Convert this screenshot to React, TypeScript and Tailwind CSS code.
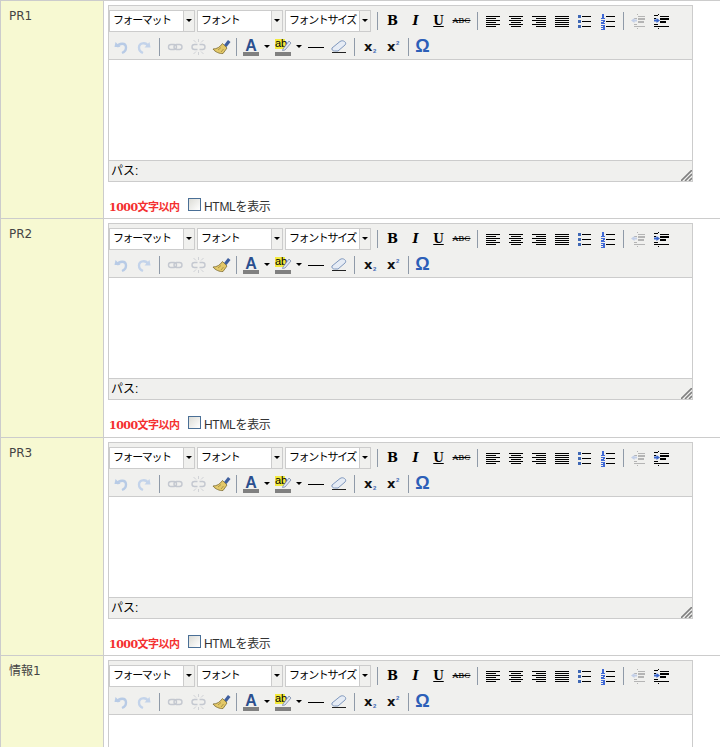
import React from 'react';

const ui = { fontFamily: '"Liberation Sans", "Noto Sans CJK JP", sans-serif' };

// --- Icons (20x20 box, same as the editor's sprite) ---
const Svg = ({ children, w = 20 }: { children: React.ReactNode; w?: number }) => (
  <svg width={w} height="20" viewBox={`0 0 ${w} 20`} className="block">
    {children}
  </svg>
);

const Lines = ({ rows, color = '#000' }: { rows: [number, number, number][]; color?: string }) => (
  <g shapeRendering="crispEdges" fill={color}>
    {rows.map(([x, y, w], i) => (
      <rect key={i} x={x} y={y} width={w} height="1" />
    ))}
  </g>
);

const y6 = [5, 7, 9, 11, 13, 15];
const AlignLeft = () => <Svg><Lines rows={y6.map((y, i) => [3, y, i % 2 ? 10 : 14] as [number, number, number])} /></Svg>;
const AlignCenter = () => <Svg><Lines rows={y6.map((y, i) => [i % 2 ? 5 : 3, y, i % 2 ? 10 : 14] as [number, number, number])} /></Svg>;
const AlignRight = () => <Svg><Lines rows={y6.map((y, i) => [i % 2 ? 7 : 3, y, i % 2 ? 10 : 14] as [number, number, number])} /></Svg>;
const AlignFull = () => <Svg><Lines rows={y6.map((y) => [3, y, 14] as [number, number, number])} /></Svg>;

const Bullets = () => (
  <Svg>
    <Lines rows={[[7, 5, 9], [7, 10, 9], [7, 15, 9]]} />
    <g shapeRendering="crispEdges" fill="#3f68b5">
      <rect x="3" y="4" width="3" height="3" />
      <rect x="3" y="9" width="3" height="3" />
      <rect x="3" y="14" width="3" height="3" />
    </g>
  </Svg>
);

// numbers are only a few blue pixels at this size
const Numbers = () => (
  <Svg>
    <Lines rows={[[8, 5, 9], [8, 10, 9], [8, 15, 9]]} />
    <g shapeRendering="crispEdges" fill="#3f68d5">
      <rect x="4" y="3" width="2" height="4" />
      <rect x="3" y="7" width="4" height="1" />
      <rect x="3" y="9" width="4" height="1" />
      <rect x="5" y="10" width="2" height="1" />
      <rect x="3" y="11" width="3" height="1" />
      <rect x="3" y="12" width="4" height="1" />
      <rect x="3" y="14" width="4" height="1" />
      <rect x="5" y="15" width="2" height="3" />
      <rect x="3" y="16" width="3" height="1" />
      <rect x="3" y="18" width="4" height="1" />
    </g>
  </Svg>
);

const Outdent = () => (
  <Svg>
    <Lines color="#b4b4b4" rows={[[10, 5, 7], [6, 7, 3], [6, 13, 3], [6, 15, 11]]} />
    <g shapeRendering="crispEdges" fill="#b4b4b4">
      <rect x="10" y="7" width="7" height="2" />
      <rect x="10" y="10" width="6" height="2" />
      <rect x="9" y="3" width="1" height="1" />
      <rect x="9" y="17" width="1" height="1" />
    </g>
    <path d="M3 9.5 L6.5 7 V8.5 H9 V10.5 H6.5 V12 Z" fill="#c3cfe8" />
  </Svg>
);

const Indent = () => (
  <Svg>
    <Lines rows={[[3, 4, 4], [9, 5, 9], [3, 7, 2], [3, 13, 4], [3, 15, 15]]} />
    <g shapeRendering="crispEdges" fill="#000">
      <rect x="9" y="7" width="9" height="2" />
      <rect x="9" y="10" width="6" height="2" />
      <rect x="7" y="3" width="1" height="1" />
      <rect x="7" y="17" width="1" height="1" />
    </g>
    <path d="M9 9.5 L5.5 7 V8.5 H3 V10.5 H5.5 V12 Z" fill="#3a66cc" />
  </Svg>
);

const Undo = () => (
  <Svg>
    <path d="M6 10 C8 5.5 15 5.5 15 10.5 C15 13 13.5 15 11 16" fill="none" stroke="#b8cbe6" strokeWidth="2.4" />
    <path d="M3.5 10 H9.5 L4.5 5 Z" fill="#b8cbe6" />
  </Svg>
);

const Redo = () => (
  <Svg>
    <path d="M14 9 C12 5 5 5.5 5 10.5 C5 13 6.5 15 9 16" fill="none" stroke="#c3d3ea" strokeWidth="2.4" />
    <path d="M16.5 10.5 H10.5 L15.5 5 Z" fill="#c3d3ea" />
  </Svg>
);

const LinkIcon = () => (
  <Svg>
    <rect x="2.5" y="7.5" width="8" height="5" rx="2.5" fill="none" stroke="#c4c8d0" strokeWidth="1.4" />
    <rect x="8" y="7.5" width="8" height="5" rx="2.5" fill="none" stroke="#c4c8d0" strokeWidth="1.4" />
  </Svg>
);

const Unlink = () => (
  <Svg>
    <path d="M8.5 7.5 H5.5 A2.5 2.5 0 0 0 5.5 12.5 H8.5 M10.5 7.5 H13.5 A2.5 2.5 0 0 1 13.5 12.5 H10.5" fill="none" stroke="#c4c8d0" strokeWidth="1.4" />
    <path d="M9.5 2 V5 M9.5 15 V18 M4.5 3 L7 5.5 M14.5 3 L12 5.5 M4.5 17 L7 14.5 M14.5 17 L12 14.5" stroke="#d0d2d6" strokeWidth="1" fill="none" />
  </Svg>
);

const Brush = () => (
  <Svg>
    <path d="M12 8 L16 3 L18.5 5 L14.5 10 Z" fill="#3f5f9e" />
    <path d="M10.5 6.5 L15 11 L11 16.5 C8 17 3 15 1 12 C5 12 8 10 10.5 6.5 Z" fill="#e3c868" stroke="#7c6c34" strokeWidth="0.8" />
    <path d="M6 13 L9 10.5 M9 15 L11.5 12" stroke="#a08a40" strokeWidth="0.8" />
  </Svg>
);

const ForeColor = () => (
  <Svg>
    <text x="10" y="14" textAnchor="middle" fontSize="16" fontWeight="700" fontFamily="Liberation Sans" fill="#2b4f8f">A</text>
    <rect x="2" y="15" width="16" height="4" fill="#808080" shapeRendering="crispEdges" />
  </Svg>
);

const BackColor = () => (
  <Svg>
    <rect x="2" y="2" width="10" height="10" fill="#f2ea3c" shapeRendering="crispEdges" />
    <text x="2" y="10" fontSize="11" fontFamily="Liberation Sans" fill="#000">ab</text>
    <path d="M10 12 L16 4 L18 6 L12 13 L9.5 13.5 Z" fill="#dfe6f2" stroke="#7a8aa8" strokeWidth="0.8" />
    <rect x="2" y="15" width="16" height="4" fill="#808080" shapeRendering="crispEdges" />
  </Svg>
);

const Hr = () => (
  <Svg>
    <rect x="1" y="10" width="16" height="1" fill="#000" shapeRendering="crispEdges" />
  </Svg>
);

const Eraser = () => (
  <Svg>
    <path d="M2 11 L10 4.5 C11.5 3.5 13 3.5 14.5 4.5 C16 5.5 16 7 15 8 L8 14 H4.5 C2.5 14 1.5 12.5 2 11 Z" fill="#e6ecf5" stroke="#7f97bd" strokeWidth="1" />
    <path d="M2 15.5 H16" stroke="#222" strokeWidth="1" shapeRendering="crispEdges" />
  </Svg>
);

const Sub = () => (
  <Svg>
    <text x="3" y="14" fontSize="13" fontWeight="700" fontFamily="DejaVu Sans" fill="#111">x</text>
    <text x="12" y="16" fontSize="6" fontWeight="700" fontFamily="Liberation Sans" fill="#3f68b5">2</text>
  </Svg>
);

const Sup = () => (
  <Svg>
    <text x="3" y="14" fontSize="13" fontWeight="700" fontFamily="DejaVu Sans" fill="#111">x</text>
    <text x="12" y="8" fontSize="6" fontWeight="700" fontFamily="Liberation Sans" fill="#3f68b5">2</text>
  </Svg>
);

const Glyph = ({ className, children }: { className: string; children: React.ReactNode }) => (
  <span className={`flex w-5 h-5 items-center justify-center ${className}`}>{children}</span>
);

// --- Toolbar pieces ---
const Btn = ({ children }: { children: React.ReactNode }) => (
  <div className="flex w-[23px] h-5 shrink-0 items-center justify-center">{children}</div>
);

const Sep = ({ className }: { className: string }) => (
  <div className={`flex h-5 shrink-0 items-center ${className}`}>
    <div className="w-px h-[18px] bg-[#8f9aa8]" />
  </div>
);

const Drop = () => (
  <div className="flex w-3 h-5 shrink-0 items-center justify-center">
    <div className="w-0 h-0 border-x-[3px] border-x-transparent border-t-[3px] border-t-black" />
  </div>
);

const Select = ({ label }: { label: string }) => (
  <div className="flex w-[86px] h-[22px] shrink-0 border border-[#ccc] bg-white">
    <div className="flex-1 pl-[3px] text-[11px] leading-[19px] tracking-[-1.4px] text-black whitespace-nowrap">{label}</div>
    <div className="flex w-[11px] items-center justify-center bg-[#f0f0ee] border-l border-[#ccc]">
      <div className="w-0 h-0 border-x-[3px] border-x-transparent border-t-[3px] border-t-black" />
    </div>
  </div>
);

const Editor = () => (
  <div className="w-[585px] border border-[#ccc]">
    <div className="h-[54px] bg-[#f0f0ee] border-b border-[#ccc] pt-[3px]">
      <div className="flex items-center h-[23px]">
        <div className="flex gap-0.5">
          <Select label="フォーマット" />
          <Select label="フォント" />
          <Select label="フォントサイズ" />
        </div>
        <div className="w-[1px] shrink-0" />
        <Sep className="w-[9px] pl-[5px]" />
        <Btn><Glyph className="text-[13px] font-bold text-black [font-family:'DejaVu_Serif']">B</Glyph></Btn>
        <Btn><Glyph className="text-[13px] font-bold italic text-black [font-family:'DejaVu_Serif']">I</Glyph></Btn>
        <Btn><Glyph className="text-[12px] font-bold underline text-black [font-family:'DejaVu_Serif']">U</Glyph></Btn>
        <Btn><Glyph className="text-[8px] line-through text-black [font-family:'DejaVu_Serif']">ABC</Glyph></Btn>
        <Sep className="w-[8px] pl-[4px]" />
        <Btn><AlignLeft /></Btn>
        <Btn><AlignCenter /></Btn>
        <Btn><AlignRight /></Btn>
        <Btn><AlignFull /></Btn>
        <Btn><Bullets /></Btn>
        <Btn><Numbers /></Btn>
        <Sep className="w-[7px] pl-[4px]" />
        <Btn><Outdent /></Btn>
        <Btn><Indent /></Btn>
      </div>
      <div className="flex items-center h-[23px] mt-[3px]">
        <Btn><Undo /></Btn>
        <Btn><Redo /></Btn>
        <Sep className="w-[9px] pl-[4px]" />
        <Btn><LinkIcon /></Btn>
        <Btn><Unlink /></Btn>
        <Btn><Brush /></Btn>
        <Sep className="w-[8px] pl-[3px]" />
        <ForeColor />
        <Drop />
        <BackColor />
        <Drop />
        <Btn><Hr /></Btn>
        <Btn><Eraser /></Btn>
        <Sep className="w-[8px] pl-[3px]" />
        <Btn><Sub /></Btn>
        <Btn><Sup /></Btn>
        <Sep className="w-[6px] pl-[3px]" />
        <Btn><Glyph className="text-[18px] font-bold text-[#2c5fb8]">Ω</Glyph></Btn>
      </div>
    </div>
    <div className="h-[100px] bg-white" />
    <div className="relative h-[21px] bg-[#f0f0ee] border-t border-[#ccc] pl-[2px] text-[12px] leading-[20px] text-black">
      パス:
      <svg width="11" height="11" viewBox="0 0 11 11" className="absolute right-0 bottom-0">
        <path d="M11 0 L0 11 M11 4 L4 11 M11 8 L8 11" stroke="#808080" strokeWidth="1.6" fill="none" />
      </svg>
    </div>
  </div>
);

const Row = ({ label, rowClass }: { label: string; rowClass: string }) => (
  <div className={`flex shrink-0 border-t border-[#ccc] ${rowClass}`}>
    <div className="w-[104px] shrink-0 border-x border-[#ccc] bg-[#f7f9d2] pl-2 pt-2 text-[12px] leading-[14px] text-[#444] [font-family:'DejaVu_Sans','Noto_Sans_CJK_JP',sans-serif]">
      {label}
    </div>
    <div className="flex-1 pl-1 pt-1">
      <Editor />
      <div className="flex items-start h-[13px] mt-4 pl-px">
        <span className="w-[79px] pt-[3px] text-[11px] leading-[13px] tracking-[-0.5px] font-bold text-[#f43030] whitespace-nowrap [font-family:'DejaVu_Serif','Noto_Sans_CJK_JP',serif]">1000文字以内</span>
        <span className="w-[13px] h-[13px] border border-[#4a6f96] bg-gradient-to-br from-[#dcdcd6] to-white" />
        <span className="ml-[3px] pt-[3px] text-[12px] leading-[13px] tracking-[-0.3px] text-[#333] whitespace-nowrap">HTMLを表示</span>
      </div>
    </div>
  </div>
);

export default function App() {
  return (
    <div className="flex flex-col w-[720px] h-[747px] overflow-hidden bg-white" style={ui}>
      <Row label="PR1" rowClass="h-[218px]" />
      <Row label="PR2" rowClass="h-[219px]" />
      <Row label="PR3" rowClass="h-[218px]" />
      <Row label="情報1" rowClass="h-[218px]" />
    </div>
  );
}
